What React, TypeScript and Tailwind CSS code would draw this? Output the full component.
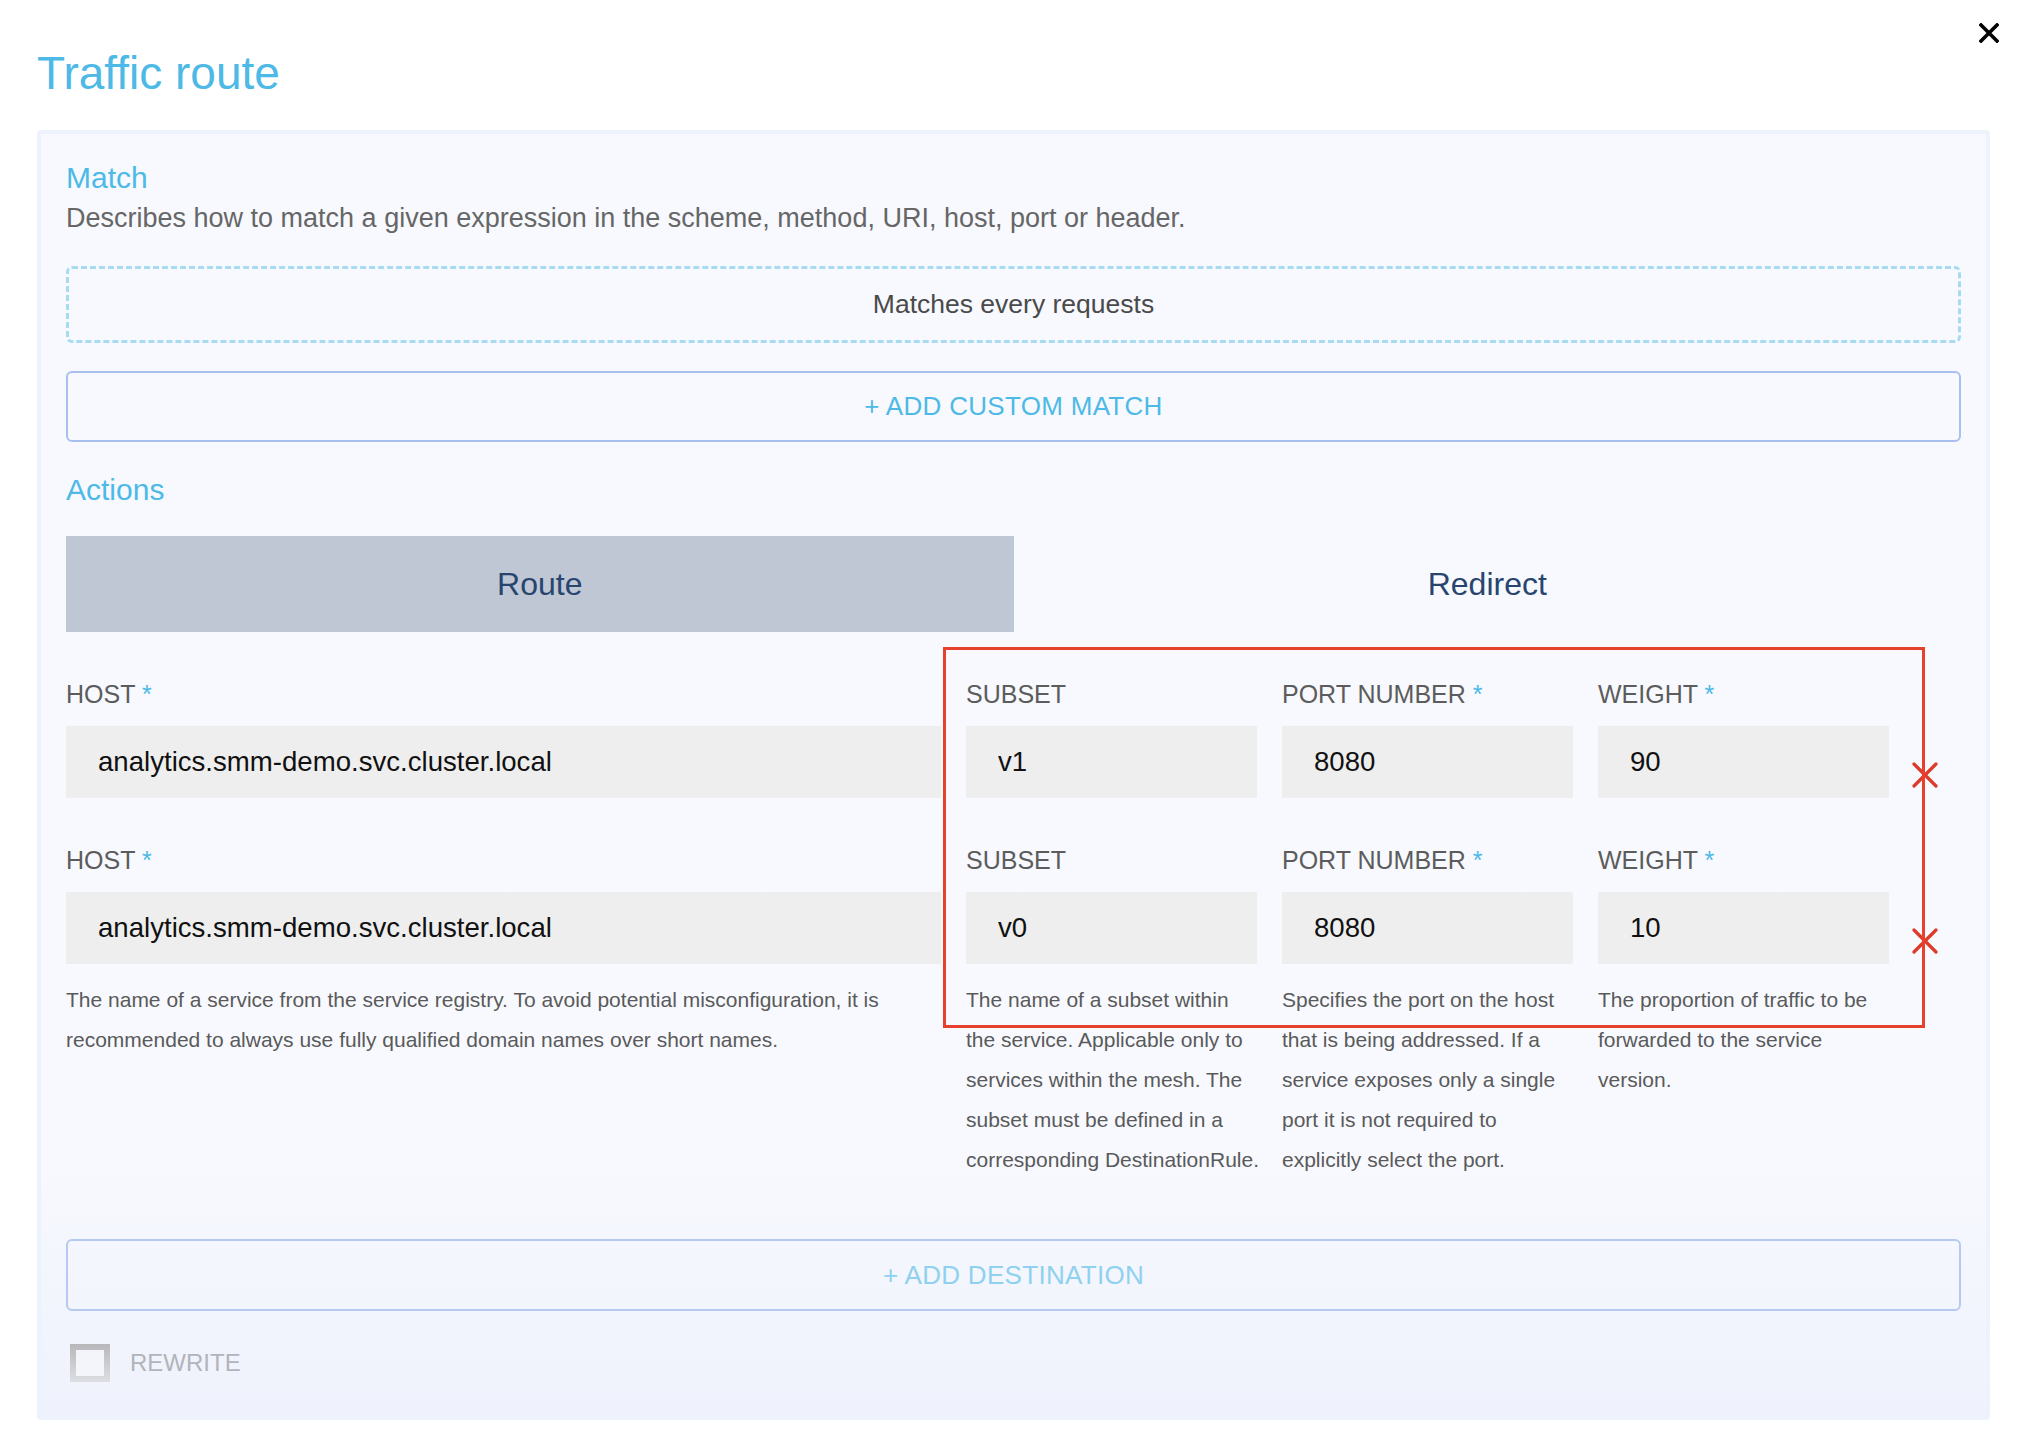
import React from 'react';

type Destination = {
  host: string;
  subset: string;
  port: string;
  weight: string;
};

const destinations: Destination[] = [
  { host: 'analytics.smm-demo.svc.cluster.local', subset: 'v1', port: '8080', weight: '90' },
  { host: 'analytics.smm-demo.svc.cluster.local', subset: 'v0', port: '8080', weight: '10' },
];

const hints = {
  host: [
    'The name of a service from the service registry. To avoid potential misconfiguration, it is',
    'recommended to always use fully qualified domain names over short names.',
  ],
  subset: [
    'The name of a subset within',
    'the service. Applicable only to',
    'services within the mesh. The',
    'subset must be defined in a',
    'corresponding DestinationRule.',
  ],
  port: [
    'Specifies the port on the host',
    'that is being addressed. If a',
    'service exposes only a single',
    'port it is not required to',
    'explicitly select the port.',
  ],
  weight: ['The proportion of traffic to be', 'forwarded to the service', 'version.'],
};

function Label({ text, required }: { text: string; required?: boolean }) {
  return (
    <div className="h-[30px] text-[25px] leading-[30px] text-[#5c5c5c] whitespace-nowrap">
      {text}
      {required && <span className="text-[#4db9e6]"> *</span>}
    </div>
  );
}

function Field({ value }: { value: string }) {
  return (
    <input
      readOnly
      value={value}
      className="w-full h-[72px] bg-[#eeeeee] px-[32px] text-[27.6px] text-[#111111] outline-none font-['Liberation_Sans',Arial,sans-serif]"
    />
  );
}

function Hint({ lines }: { lines: string[] }) {
  return (
    <div className="text-[21px] leading-[40px] text-[#5a5a5a]">
      {lines.map((l) => (
        <div key={l} className="whitespace-nowrap">
          {l}
        </div>
      ))}
    </div>
  );
}

function RemoveIcon() {
  return (
    <svg width="26" height="26" viewBox="0 0 26 26" fill="none">
      <path d="M2 2 L24 24 M24 2 L2 24" stroke="#dd3a2a" strokeWidth="3.2" strokeLinecap="round" />
    </svg>
  );
}

export default function App() {
  return (
    <div className="relative min-h-screen bg-white pl-[37px] pr-[32px] pb-[18px] font-['Liberation_Sans',Arial,sans-serif]">
      {/* close */}
      <button className="absolute top-[23px] right-[23px] w-[20px] h-[20px]">
        <svg width="20" height="20" viewBox="0 0 20 20">
          <path d="M2 2 L18 18 M18 2 L2 18" stroke="#000" strokeWidth="3.6" strokeLinecap="square" />
        </svg>
      </button>

      <h1 className="pt-[46px] text-[46px] leading-[54px] text-[#4db9e6]">Traffic route</h1>

      <div className="mt-[30px] rounded-[4px] border-4 border-[#eef2fc] bg-linear-to-b from-[#f7f9fe] via-[#f7f9fe] via-80% to-[#eff2fc] px-[25px] pt-[26px] pb-[34px]">
        <h2 className="text-[30px] leading-[36px] text-[#4db9e6]">Match</h2>
        <p className="mt-[7px] text-[27px] leading-[30px] text-[#666666]">
          Describes how to match a given expression in the scheme, method, URI, host, port or header.
        </p>

        <div className="mt-[33px] h-[77px] rounded-[6px] border-[3px] border-dashed border-[#a6dbf2] flex items-center justify-center text-[26.5px] text-[#4a4a4a]">
          Matches every requests
        </div>

        <button className="mt-[28px] w-full h-[71px] rounded-[6px] border-2 border-[#a9bff0] text-[26px] text-[#4db9e6] tracking-[0.3px]">
          + ADD CUSTOM MATCH
        </button>

        <h2 className="mt-[30px] text-[30px] leading-[36px] text-[#4db9e6]">Actions</h2>

        <div className="mt-[28px] grid grid-cols-2 h-[96px]">
          <button className="bg-[#bfc7d4] text-[32px] text-[#28456f]">Route</button>
          <button className="text-[32px] text-[#28456f]">Redirect</button>
        </div>

        <div className="relative mt-[47px]">
          <div className="grid grid-cols-[875px_291px_291px_291px_1fr] gap-x-[25px]">
            {destinations.map((d, i) => (
              <React.Fragment key={i}>
                <div className={i > 0 ? 'mt-[47px]' : ''}>
                  <Label text="HOST" required />
                </div>
                <div className={i > 0 ? 'mt-[47px]' : ''}>
                  <Label text="SUBSET" />
                </div>
                <div className={i > 0 ? 'mt-[47px]' : ''}>
                  <Label text="PORT NUMBER" required />
                </div>
                <div className={i > 0 ? 'mt-[47px]' : ''}>
                  <Label text="WEIGHT" required />
                </div>
                <div />
                <div className="mt-[17px]">
                  <Field value={d.host} />
                </div>
                <div className="mt-[17px]">
                  <Field value={d.subset} />
                </div>
                <div className="mt-[17px]">
                  <Field value={d.port} />
                </div>
                <div className="mt-[17px]">
                  <Field value={d.weight} />
                </div>
                <div className="mt-[17px] pt-[36px] -ml-[2px]">
                  <RemoveIcon />
                </div>
              </React.Fragment>
            ))}
            <div className="mt-[16px]">
              <Hint lines={hints.host} />
            </div>
            <div className="mt-[16px]">
              <Hint lines={hints.subset} />
            </div>
            <div className="mt-[16px]">
              <Hint lines={hints.port} />
            </div>
            <div className="mt-[16px]">
              <Hint lines={hints.weight} />
            </div>
            <div />
          </div>

          {/* highlight annotation */}
          <div className="pointer-events-none absolute left-[877px] top-[-32px] w-[982px] h-[381px] border-[3px] border-[#e8412b]" />
        </div>

        <button className="mt-[59px] w-full h-[72px] rounded-[6px] border-2 border-[#b6c9f2] text-[26px] text-[#8fd1ef] tracking-[0.3px]">
          + ADD DESTINATION
        </button>

        <label className="mt-[33px] ml-[4px] flex items-center gap-[20px]">
          <span className="w-[40px] h-[38px] p-[6px] bg-linear-to-b from-[#b8b8ba] to-[#dddee3]">
            <span className="block w-full h-full bg-[#f3f5fb]" />
          </span>
          <span className="text-[24px] text-[#b1b4ba]">REWRITE</span>
        </label>
      </div>
    </div>
  );
}
